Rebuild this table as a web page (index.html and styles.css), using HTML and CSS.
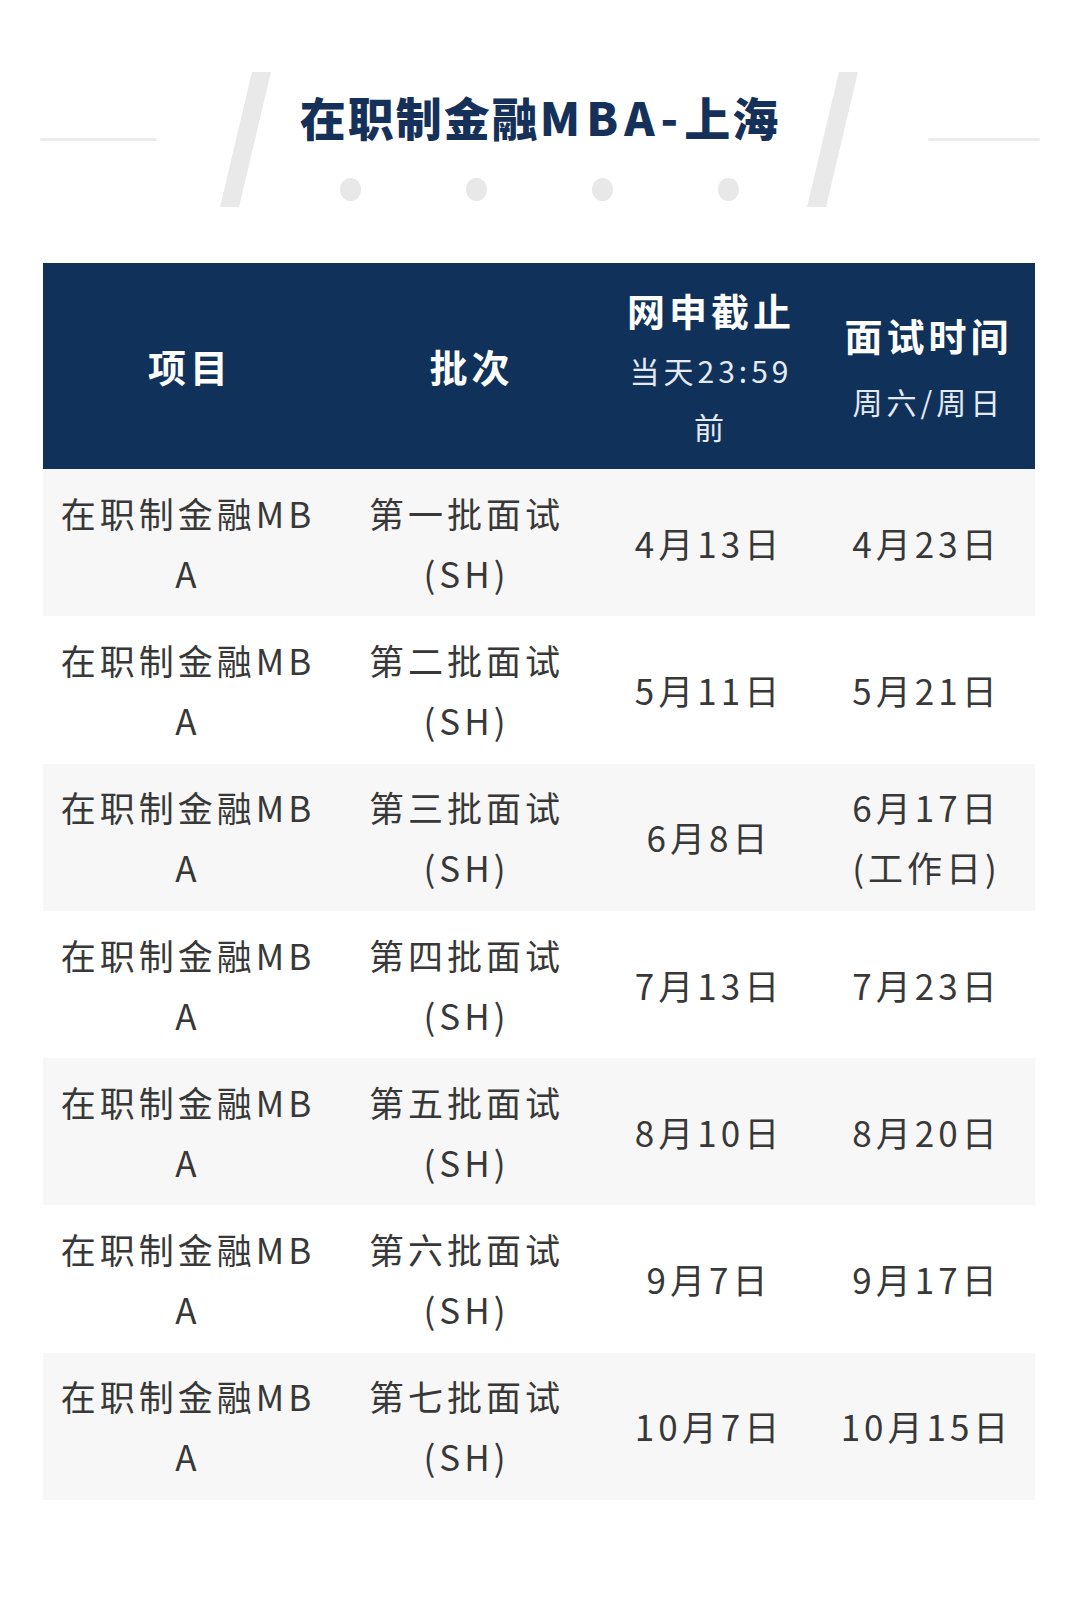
FILE: index.html
```html
<!DOCTYPE html>
<html lang="zh-CN">
<head>
<meta charset="utf-8">
<title>在职制金融MBA-上海</title>
<link rel="stylesheet" href="styles.css">
</head>
<body>
<header class="banner">
  <div class="rule"></div>
  <div class="slash slash-left"></div>
  <div class="center">
    <h1 class="title">在职制金融<span class="latin">MBA-</span>上海</h1>
    <div class="dots"><span class="dot"></span><span class="dot"></span><span class="dot"></span><span class="dot"></span></div>
  </div>
  <div class="slash"></div>
  <div class="rule rule-right"></div>
</header>

<section class="table">
  <div class="head">
    <div class="hcell hc-plain"><span class="hmain">项目</span></div>
    <div class="hcell hc-plain hc-batch"><span class="hmain">批次</span></div>
    <div class="hcell hc-deadline"><span class="hmain">网申截止</span><span class="hsub hsub-tight">当天23:59<br>前</span></div>
    <div class="hcell hc-interview"><span class="hmain">面试时间</span><span class="hsub hsub-gap">周六/周日</span></div>
  </div>

  <div class="row odd">
    <div class="cell">在职制金融MB<br>A</div>
    <div class="cell">第一批面试<br>(SH)</div>
    <div class="cell">4月13日</div>
    <div class="cell">4月23日</div>
  </div>
  <div class="row">
    <div class="cell">在职制金融MB<br>A</div>
    <div class="cell">第二批面试<br>(SH)</div>
    <div class="cell">5月11日</div>
    <div class="cell">5月21日</div>
  </div>
  <div class="row odd">
    <div class="cell">在职制金融MB<br>A</div>
    <div class="cell">第三批面试<br>(SH)</div>
    <div class="cell">6月8日</div>
    <div class="cell">6月17日<br>(工作日)</div>
  </div>
  <div class="row">
    <div class="cell">在职制金融MB<br>A</div>
    <div class="cell">第四批面试<br>(SH)</div>
    <div class="cell">7月13日</div>
    <div class="cell">7月23日</div>
  </div>
  <div class="row odd">
    <div class="cell">在职制金融MB<br>A</div>
    <div class="cell">第五批面试<br>(SH)</div>
    <div class="cell">8月10日</div>
    <div class="cell">8月20日</div>
  </div>
  <div class="row">
    <div class="cell">在职制金融MB<br>A</div>
    <div class="cell">第六批面试<br>(SH)</div>
    <div class="cell">9月7日</div>
    <div class="cell">9月17日</div>
  </div>
  <div class="row odd">
    <div class="cell">在职制金融MB<br>A</div>
    <div class="cell">第七批面试<br>(SH)</div>
    <div class="cell">10月7日</div>
    <div class="cell">10月15日</div>
  </div>
</section>
</body>
</html>
```

FILE: styles.css
```css
* { box-sizing: border-box; }

html, body {
  margin: 0;
  padding: 0;
  background: #ffffff;
}

body {
  width: 1079px;
  min-height: 1612px;
  font-family: "Noto Sans CJK SC", "Noto Sans", sans-serif;
  color: #383838;
}

/* ---------- banner ---------- */
.banner {
  height: 263px;
  padding-top: 72px;
  display: flex;
  align-items: flex-start;
}

.rule {
  width: 117px;
  height: 3px;
  margin-left: 40px;
  margin-top: 66px;
  background: #ebebeb;
  border-radius: 2px;
}

.rule-right {
  margin-left: 86px;
  width: 112px;
}

.slash {
  width: 19px;
  height: 135px;
  background: #e9e9e9;
  transform: skewX(-13.3deg);
}

.slash-left { margin-left: 79px; }

.center {
  width: 568px;
  display: flex;
  flex-direction: column;
  align-items: center;
}

.title {
  margin: 16px 0 0 0;
  font-size: 46px;
  line-height: 56px;
  font-weight: 900;
  letter-spacing: 2px;
  color: #15315a;
  white-space: nowrap;
  padding-left: 2px;
}

.title .latin { letter-spacing: 6px; }

.dots {
  margin-top: 34px;
  display: flex;
  gap: 105px;
}

.dot {
  width: 21px;
  height: 23px;
  border-radius: 50%;
  background: #e8e8e8;
}

/* ---------- table ---------- */
.table {
  margin-left: 43px;
  width: 992px;
}

.head,
.row {
  display: grid;
  grid-template-columns: 290px 267px 218px 217px;
}

.head {
  height: 206px;
  background: #10325a;
  color: #ffffff;
}

.hcell {
  display: flex;
  flex-direction: column;
  align-items: center;
  justify-content: center;
  text-align: center;
}

.hc-plain { padding-bottom: 1px; }
.hc-batch { padding-left: 6px; }
.hc-deadline { padding-top: 4px; }
.hc-interview { padding-top: 3px; }

.hmain {
  font-size: 38px;
  line-height: 56px;
  font-weight: 700;
  letter-spacing: 4px;
  margin-right: -4px;
}

.hsub {
  font-size: 30px;
  line-height: 56px;
  letter-spacing: 4px;
  margin-right: -4px;
  color: #e3eaf3;
}

.hsub-tight { margin-top: 4px; }
.hsub-gap { margin-top: 10px; }

.row {
  height: 147.3px;
  background: #ffffff;
}

.row.odd { background: #f7f7f7; }

.cell {
  display: flex;
  align-items: center;
  justify-content: center;
  text-align: center;
  font-size: 35px;
  line-height: 60px;
  letter-spacing: 4px;
  color: #383838;
}
```
